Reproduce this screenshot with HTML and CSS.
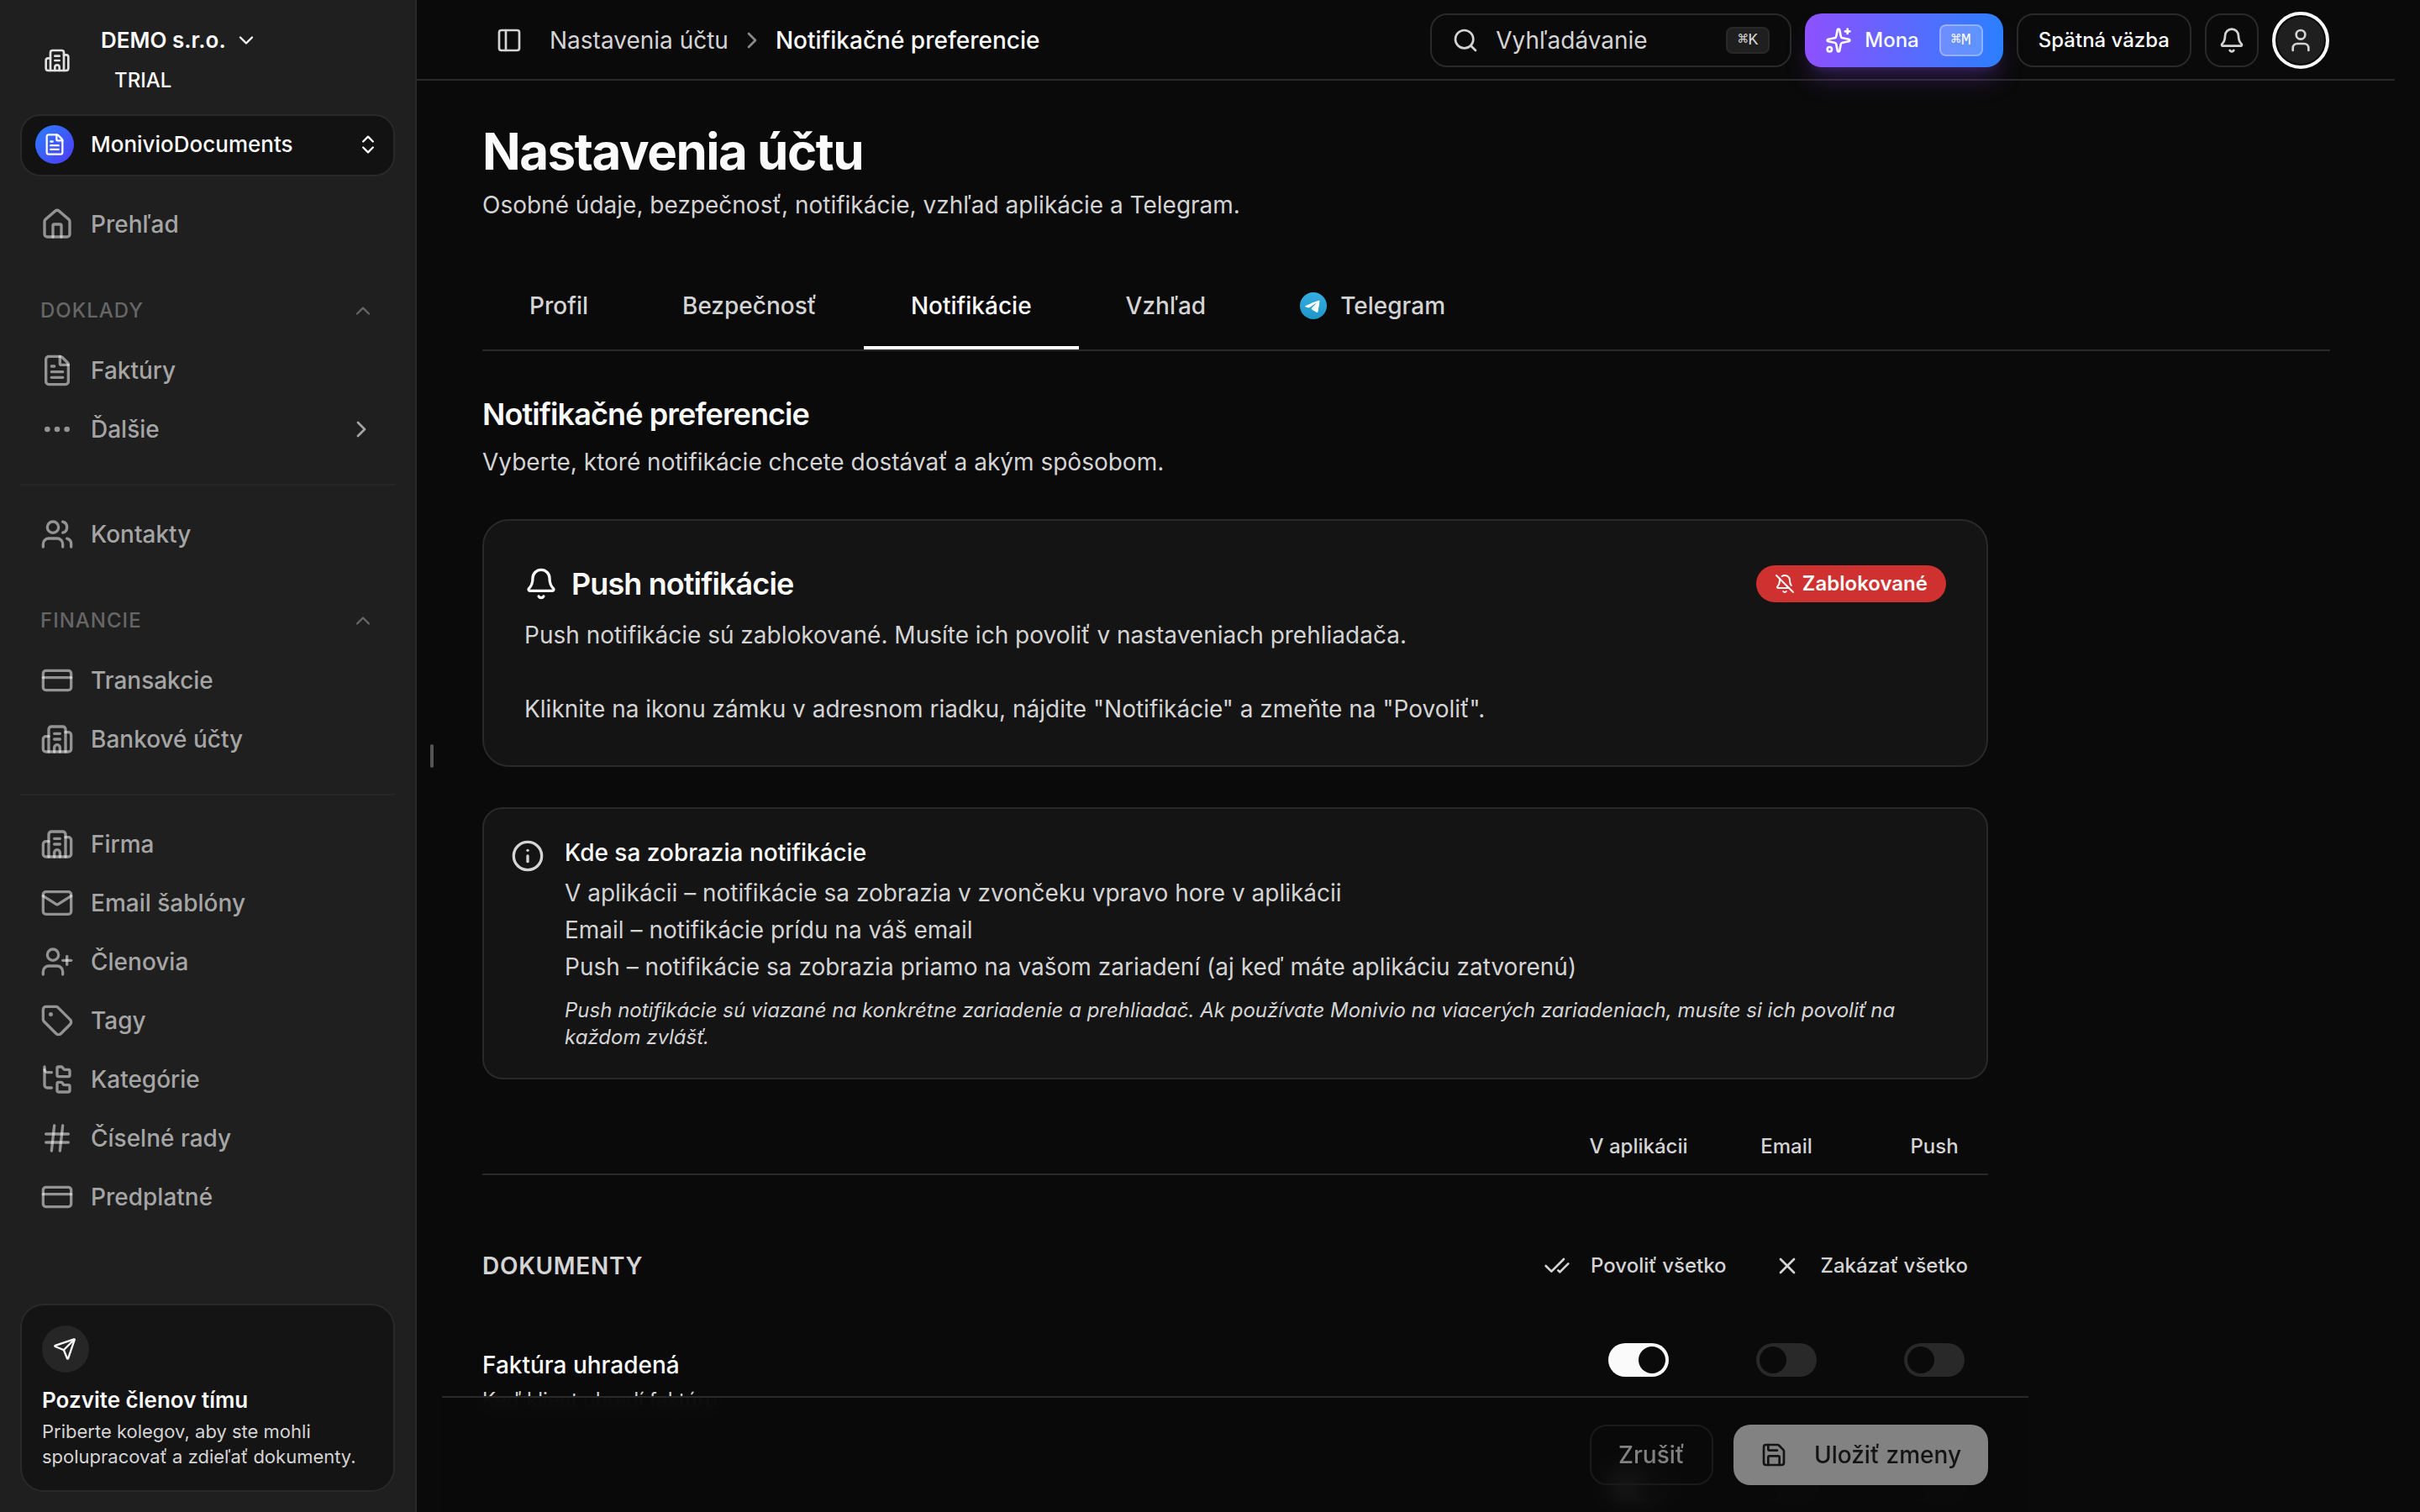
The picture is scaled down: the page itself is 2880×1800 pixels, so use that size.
FILE: index.html
```html
<!DOCTYPE html>
<html lang="sk">
<head>
<meta charset="utf-8">
<meta name="viewport" content="width=device-width, initial-scale=1">
<title>Nastavenia účtu – Notifikačné preferencie</title>
<link rel="stylesheet" href="styles.css">
</head>
<body>
<svg class="sprite" aria-hidden="true">
  <symbol id="building" viewBox="0 0 24 24"><path d="M10 12h4"/><path d="M10 8h4"/><path d="M14 21v-3a2 2 0 0 0-4 0v3"/><path d="M6 10H4a2 2 0 0 0-2 2v7a2 2 0 0 0 2 2h16a2 2 0 0 0 2-2V9a2 2 0 0 0-2-2h-2"/><path d="M6 21V5a2 2 0 0 1 2-2h8a2 2 0 0 1 2 2v16"/></symbol>
  <symbol id="file" viewBox="0 0 24 24"><path d="M6 22a2 2 0 0 1-2-2V4a2 2 0 0 1 2-2h8a2.4 2.4 0 0 1 1.704.706l3.588 3.588A2.4 2.4 0 0 1 20 8v12a2 2 0 0 1-2 2z"/><path d="M14 2v5a1 1 0 0 0 1 1h5"/><path d="M10 9H8"/><path d="M16 13H8"/><path d="M16 17H8"/></symbol>
  <symbol id="home" viewBox="0 0 24 24"><path d="M15 21v-8a1 1 0 0 0-1-1h-4a1 1 0 0 0-1 1v8"/><path d="M3 10a2 2 0 0 1 .709-1.528l7-6a2 2 0 0 1 2.582 0l7 6A2 2 0 0 1 21 10v9a2 2 0 0 1-2 2H5a2 2 0 0 1-2-2z"/></symbol>
  <symbol id="dots" viewBox="0 0 24 24"><circle cx="12" cy="12" r="1"/><circle cx="19" cy="12" r="1"/><circle cx="5" cy="12" r="1"/></symbol>
  <symbol id="users" viewBox="0 0 24 24"><path d="M16 21v-2a4 4 0 0 0-4-4H6a4 4 0 0 0-4 4v2"/><path d="M16 3.128a4 4 0 0 1 0 7.744"/><path d="M22 21v-2a4 4 0 0 0-3-3.87"/><circle cx="9" cy="7" r="4"/></symbol>
  <symbol id="card" viewBox="0 0 24 24"><rect x="2" y="5" width="20" height="14" rx="2"/><path d="M2 10h20"/></symbol>
  <symbol id="mail" viewBox="0 0 24 24"><path d="m22 7-8.991 5.727a2 2 0 0 1-2.009 0L2 7"/><rect x="2" y="4" width="20" height="16" rx="2"/></symbol>
  <symbol id="user-plus" viewBox="0 0 24 24"><path d="M16 21v-2a4 4 0 0 0-4-4H6a4 4 0 0 0-4 4v2"/><circle cx="9" cy="7" r="4"/><path d="M19 8v6"/><path d="M22 11h-6"/></symbol>
  <symbol id="tag" viewBox="0 0 24 24"><path d="M12.586 2.586A2 2 0 0 0 11.172 2H4a2 2 0 0 0-2 2v7.172a2 2 0 0 0 .586 1.414l8.704 8.704a2.426 2.426 0 0 0 3.42 0l6.58-6.58a2.426 2.426 0 0 0 0-3.42z"/><circle cx="7.5" cy="7.5" r=".5" fill="currentColor"/></symbol>
  <symbol id="tree" viewBox="0 0 24 24"><path d="M20 10a1 1 0 0 0 1-1V6a1 1 0 0 0-1-1h-2.5a1 1 0 0 1-.8-.4l-.9-1.2A1 1 0 0 0 15 3h-2a1 1 0 0 0-1 1v5a1 1 0 0 0 1 1Z"/><path d="M20 21a1 1 0 0 0 1-1v-3a1 1 0 0 0-1-1h-2.9a1 1 0 0 1-.88-.55l-.42-.85a1 1 0 0 0-.92-.6H13a1 1 0 0 0-1 1v5a1 1 0 0 0 1 1Z"/><path d="M3 5a2 2 0 0 0 2 2h3"/><path d="M3 3v13a2 2 0 0 0 2 2h3"/></symbol>
  <symbol id="hash" viewBox="0 0 24 24"><path d="M4 9h16"/><path d="M4 15h16"/><path d="M10 3 8 21"/><path d="m16 3-2 18"/></symbol>
  <symbol id="send" viewBox="0 0 24 24"><path d="M14.536 21.686a.5.5 0 0 0 .937-.024l6.5-19a.496.496 0 0 0-.635-.635l-19 6.5a.5.5 0 0 0-.024.937l7.93 3.18a2 2 0 0 1 1.112 1.11z"/><path d="m21.854 2.147-10.94 10.939"/></symbol>
  <symbol id="down" viewBox="0 0 24 24"><path d="m6 9 6 6 6-6"/></symbol>
  <symbol id="up" viewBox="0 0 24 24"><path d="m18 15-6-6-6 6"/></symbol>
  <symbol id="right" viewBox="0 0 24 24"><path d="m9 18 6-6-6-6"/></symbol>
  <symbol id="updown" viewBox="0 0 24 24"><path d="m7 15 5 5 5-5"/><path d="m7 9 5-5 5 5"/></symbol>
  <symbol id="panel" viewBox="0 0 24 24"><rect x="3" y="3" width="18" height="18" rx="2"/><path d="M9 3v18"/></symbol>
  <symbol id="search" viewBox="0 0 24 24"><path d="m21 21-4.34-4.34"/><circle cx="11" cy="11" r="8"/></symbol>
  <symbol id="sparkles" viewBox="0 0 24 24"><path d="M11.017 2.814a1 1 0 0 1 1.966 0l1.051 5.558a2 2 0 0 0 1.594 1.594l5.558 1.051a1 1 0 0 1 0 1.966l-5.558 1.051a2 2 0 0 0-1.594 1.594l-1.051 5.558a1 1 0 0 1-1.966 0l-1.051-5.558a2 2 0 0 0-1.594-1.594l-5.558-1.051a1 1 0 0 1 0-1.966l5.558-1.051a2 2 0 0 0 1.594-1.594z"/><path d="M20 2v4"/><path d="M22 4h-4"/><circle cx="4" cy="20" r="2"/></symbol>
  <symbol id="bell" viewBox="0 0 24 24"><path d="M10.268 21a2 2 0 0 0 3.464 0"/><path d="M3.262 15.326A1 1 0 0 0 4 17h16a1 1 0 0 0 .74-1.673C19.41 13.956 18 12.499 18 8A6 6 0 0 0 6 8c0 4.499-1.411 5.956-2.738 7.326"/></symbol>
  <symbol id="bell-off" viewBox="0 0 24 24"><path d="M10.268 21a2 2 0 0 0 3.464 0"/><path d="M17 17H4a1 1 0 0 1-.74-1.673C4.59 13.956 6 12.499 6 8a6 6 0 0 1 .258-1.742"/><path d="m2 2 20 20"/><path d="M8.668 3.01A6 6 0 0 1 18 8c0 2.687.77 4.653 1.707 6.05"/></symbol>
  <symbol id="user" viewBox="0 0 24 24"><path d="M19 21v-2a4 4 0 0 0-4-4H9a4 4 0 0 0-4 4v2"/><circle cx="12" cy="7" r="4"/></symbol>
  <symbol id="info" viewBox="0 0 24 24"><circle cx="12" cy="12" r="10"/><path d="M12 16v-4"/><path d="M12 8h.01"/></symbol>
  <symbol id="checks" viewBox="0 0 24 24"><path d="M18 6 7 17l-5-5"/><path d="m22 10-7.5 7.5L13 16"/></symbol>
  <symbol id="x" viewBox="0 0 24 24"><path d="M18 6 6 18"/><path d="m6 6 12 12"/></symbol>
  <symbol id="save" viewBox="0 0 24 24"><path d="M15.2 3a2 2 0 0 1 1.4.6l3.8 3.8a2 2 0 0 1 .6 1.4V19a2 2 0 0 1-2 2H5a2 2 0 0 1-2-2V5a2 2 0 0 1 2-2z"/><path d="M17 21v-7a1 1 0 0 0-1-1H8a1 1 0 0 0-1 1v7"/><path d="M7 3v4a1 1 0 0 0 1 1h7"/></symbol>
</svg>

<div class="app">
  <aside class="sidebar">
    <div class="company">
      <svg class="icon icon-sm"><use href="#building"/></svg>
      <div>
        <button class="company-name" type="button">DEMO s.r.o. <svg class="icon icon-xs"><use href="#down"/></svg></button>
        <p class="plan">TRIAL</p>
      </div>
    </div>

    <button class="switcher" type="button">
      <span class="switcher-logo"><svg class="icon icon-xs"><use href="#file"/></svg></span>
      <span class="switcher-name">MonivioDocuments</span>
      <svg class="icon icon-xs"><use href="#updown"/></svg>
    </button>

    <nav class="nav" aria-label="Hlavná navigácia">
      <a class="nav-link" href="#"><svg class="icon"><use href="#home"/></svg>Prehľad</a>
      <button class="nav-label" type="button">DOKLADY <svg class="icon icon-xs"><use href="#up"/></svg></button>
      <a class="nav-link" href="#"><svg class="icon"><use href="#file"/></svg>Faktúry</a>
      <a class="nav-link" href="#"><svg class="icon"><use href="#dots"/></svg>Ďalšie<svg class="icon nav-more"><use href="#right"/></svg></a>
      <hr class="nav-rule">
      <a class="nav-link" href="#"><svg class="icon"><use href="#users"/></svg>Kontakty</a>
      <button class="nav-label" type="button">FINANCIE <svg class="icon icon-xs"><use href="#up"/></svg></button>
      <a class="nav-link" href="#"><svg class="icon"><use href="#card"/></svg>Transakcie</a>
      <a class="nav-link" href="#"><svg class="icon"><use href="#building"/></svg>Bankové účty</a>
      <hr class="nav-rule">
      <a class="nav-link" href="#"><svg class="icon"><use href="#building"/></svg>Firma</a>
      <a class="nav-link" href="#"><svg class="icon"><use href="#mail"/></svg>Email šablóny</a>
      <a class="nav-link" href="#"><svg class="icon"><use href="#user-plus"/></svg>Členovia</a>
      <a class="nav-link" href="#"><svg class="icon"><use href="#tag"/></svg>Tagy</a>
      <a class="nav-link" href="#"><svg class="icon"><use href="#tree"/></svg>Kategórie</a>
      <a class="nav-link" href="#"><svg class="icon"><use href="#hash"/></svg>Číselné rady</a>
      <a class="nav-link" href="#"><svg class="icon"><use href="#card"/></svg>Predplatné</a>
    </nav>

    <a class="invite" href="#">
      <span class="invite-icon"><svg class="icon icon-xs"><use href="#send"/></svg></span>
      <strong class="invite-title">Pozvite členov tímu</strong>
      <span class="invite-text">Priberte kolegov, aby ste mohli spolupracovať a zdieľať dokumenty.</span>
    </a>
  </aside>
  <span class="resize-handle"></span>

  <main class="main">
    <header class="topbar">
      <button class="panel-toggle" type="button" aria-label="Bočný panel"><svg class="icon icon-sm"><use href="#panel"/></svg></button>
      <nav class="crumbs" aria-label="Navigačná cesta">
        <a href="#">Nastavenia účtu</a>
        <svg class="icon icon-sm"><use href="#right"/></svg>
        <span class="crumb-current">Notifikačné preferencie</span>
      </nav>
      <label class="search">
        <svg class="icon icon-sm"><use href="#search"/></svg>
        <input type="text" placeholder="Vyhľadávanie" aria-label="Vyhľadávanie">
        <kbd class="kbd">⌘K</kbd>
      </label>
      <button class="mona" type="button"><svg class="icon icon-sm"><use href="#sparkles"/></svg>Mona <kbd class="kbd kbd-mona">⌘M</kbd></button>
      <button class="feedback" type="button">Spätná väzba</button>
      <button class="bell" type="button" aria-label="Notifikácie"><svg class="icon icon-sm"><use href="#bell"/></svg></button>
      <button class="avatar" type="button" aria-label="Používateľ"><svg class="icon icon-sm"><use href="#user"/></svg></button>
    </header>

    <div class="content">
      <h1>Nastavenia účtu</h1>
      <p class="lead">Osobné údaje, bezpečnosť, notifikácie, vzhľad aplikácie a Telegram.</p>

      <nav class="tabs" aria-label="Nastavenia">
        <a class="tab" href="#">Profil</a>
        <a class="tab" href="#">Bezpečnosť</a>
        <a class="tab tab-active" href="#" aria-current="page">Notifikácie</a>
        <a class="tab" href="#">Vzhľad</a>
        <a class="tab" href="#">
          <svg class="telegram" viewBox="0 0 240 240"><defs><linearGradient id="tg" x1="0" y1="0" x2="0" y2="1"><stop offset="0" stop-color="#37aee2"/><stop offset="1" stop-color="#1e96c8"/></linearGradient></defs><circle cx="120" cy="120" r="120" fill="url(#tg)"/><path fill="#fff" d="M54.3 118.8c35-15.2 58.3-25.3 70-30.2 33.3-13.9 40.3-16.3 44.8-16.4 1 0 3.2.2 4.7 1.4 1.2 1 1.5 2.3 1.7 3.3s.4 3.1.2 4.7c-1.8 19-9.6 65.1-13.6 86.3-1.7 9-5 12-8.2 12.3-7 .6-12.3-4.6-19-9-10.6-6.9-16.5-11.2-26.8-18-11.9-7.8-4.2-12.1 2.6-19.1 1.8-1.8 32.5-29.8 33.1-32.3.1-.3.1-1.5-.6-2.1-.7-.6-1.7-.4-2.5-.2-1.1.2-17.9 11.4-50.6 33.5-4.8 3.3-9.1 4.9-13 4.8-4.3-.1-12.5-2.4-18.7-4.4-7.5-2.4-13.5-3.7-13-7.9.3-2.2 3.3-4.4 8.9-6.7z"/></svg>
          Telegram
        </a>
      </nav>

      <section class="prefs">
        <h2>Notifikačné preferencie</h2>
        <p class="section-text">Vyberte, ktoré notifikácie chcete dostávať a akým spôsobom.</p>

        <article class="panel push">
          <header class="push-head">
            <h2 class="push-title"><svg class="icon"><use href="#bell"/></svg>Push notifikácie</h2>
            <span class="badge"><svg class="icon icon-badge"><use href="#bell-off"/></svg>Zablokované</span>
          </header>
          <p>Push notifikácie sú zablokované. Musíte ich povoliť v nastaveniach prehliadača.</p>
          <p>Kliknite na ikonu zámku v adresnom riadku, nájdite "Notifikácie" a zmeňte na "Povoliť".</p>
        </article>

        <article class="panel where">
          <svg class="icon"><use href="#info"/></svg>
          <div>
            <h3>Kde sa zobrazia notifikácie</h3>
            <ul>
              <li>V aplikácii – notifikácie sa zobrazia v zvončeku vpravo hore v aplikácii</li>
              <li>Email – notifikácie prídu na váš email</li>
              <li>Push – notifikácie sa zobrazia priamo na vašom zariadení (aj keď máte aplikáciu zatvorenú)</li>
            </ul>
            <p class="note">Push notifikácie sú viazané na konkrétne zariadenie a prehliadač. Ak používate Monivio na viacerých zariadeniach, musíte si ich povoliť na každom zvlášť.</p>
          </div>
        </article>

        <table class="matrix">
          <colgroup><col><col class="col-channel"><col class="col-channel"><col class="col-channel"></colgroup>
          <thead>
            <tr><td></td><th scope="col">V aplikácii</th><th scope="col">Email</th><th scope="col">Push</th></tr>
          </thead>
          <tbody>
            <tr class="group">
              <td colspan="4">
                <div class="group-head">
                  <h3>DOKUMENTY</h3>
                  <button class="ghost" type="button"><svg class="icon icon-sm"><use href="#checks"/></svg>Povoliť všetko</button>
                  <button class="ghost" type="button"><svg class="icon icon-sm"><use href="#x"/></svg>Zakázať všetko</button>
                </div>
              </td>
            </tr>
            <tr class="item">
              <th scope="row">Faktúra uhradená<span class="item-text">Keď klient uhradí faktúru</span></th>
              <td><input class="switch" type="checkbox" checked aria-label="V aplikácii"></td>
              <td><input class="switch" type="checkbox" aria-label="Email"></td>
              <td><input class="switch" type="checkbox" aria-label="Push"></td>
            </tr>
            <tr class="item">
              <td></td>
              <td><input class="switch" type="checkbox" checked aria-label="V aplikácii"></td>
              <td><input class="switch" type="checkbox" aria-label="Email"></td>
              <td><input class="switch" type="checkbox" aria-label="Push"></td>
            </tr>
          </tbody>
        </table>

        <footer class="actions">
          <button class="btn btn-cancel" type="button" disabled>Zrušiť</button>
          <button class="btn btn-save" type="button" disabled><svg class="icon icon-sm"><use href="#save"/></svg>Uložiť zmeny</button>
        </footer>
      </section>
    </div>
  </main>
</div>
</body>
</html>
```
FILE: styles.css
```css
:root {
  --bg: #0a0a0a;
  --panel: #141414;
  --sidebar: #1f1f1f;
  --line: #292929;
  --text: #fafafa;
  --muted: #d4d4d4;
}

* { box-sizing: border-box; margin: 0; padding: 0; }

body {
  background: var(--bg);
  color: var(--text);
  font: 400 28px/44px Inter, "Noto Sans", sans-serif;
}

button, input { font: inherit; color: inherit; background: none; border: 0; }
a { color: inherit; text-decoration: none; }
ul { list-style: none; }
.sprite { display: none; }

.icon {
  flex: none;
  width: 40px;
  height: 40px;
  fill: none;
  stroke: currentColor;
  stroke-width: 2;
  stroke-linecap: round;
  stroke-linejoin: round;
}
.icon-sm { width: 32px; height: 32px; }
.icon-xs { width: 28px; height: 28px; }
.icon-badge { width: 24px; height: 24px; }

.app { display: flex; height: 100vh; }

/* Sidebar */
.sidebar {
  flex: none;
  display: flex;
  flex-direction: column;
  width: 496px;
  padding: 24px;
  background: var(--sidebar);
  border-right: 2px solid var(--line);
}

.company {
  display: flex;
  align-items: center;
  gap: 36px;
  padding-left: 28px;
  line-height: 48px;
  color: #e0e0e0;
}
.company-name {
  display: flex;
  align-items: center;
  gap: 10px;
  font-size: 26px;
  font-weight: 600;
}
.company-name, .plan { color: var(--text); }
.plan { padding-left: 16px; font-size: 24px; font-weight: 500; }

.switcher {
  display: flex;
  align-items: center;
  gap: 20px;
  height: 74px;
  margin-top: 16px;
  padding: 0 16px 2px;
  background: #121212;
  border: 2px solid var(--line);
  border-radius: 24px;
  text-align: left;
}
.switcher-logo {
  display: grid;
  place-items: center;
  width: 46px;
  height: 46px;
  border-radius: 50%;
  background: linear-gradient(135deg, #2b7fff, #4f39f6);
}
.switcher-name { flex: 1; font-size: 26px; font-weight: 500; }

.nav { margin-top: 22px; }
.nav-link {
  display: flex;
  align-items: center;
  gap: 20px;
  height: 70px;
  padding: 0 24px;
  color: #a5a5a5;
  font-weight: 500;
  line-height: 46px;
}
.nav-link .icon { stroke: rgba(255, 255, 255, .52); }
.nav-link .nav-more { width: 32px; height: 32px; margin-left: auto; stroke: #a5a5a5; }
.nav-label {
  display: flex;
  align-items: center;
  justify-content: space-between;
  width: 100%;
  height: 73px;
  margin-top: 31px;
  padding: 0 24px;
  color: #666;
  font-size: 24px;
  font-weight: 500;
  letter-spacing: 1px;
}
.nav-rule {
  height: 2px;
  margin: 30px 0 23px;
  border: 0;
  background: #262626;
}

.invite {
  display: flex;
  flex-direction: column;
  margin-top: auto;
  padding: 24px;
  background: var(--panel);
  border: 2px solid var(--line);
  border-radius: 28px;
}
.invite-icon {
  display: grid;
  place-items: center;
  width: 56px;
  height: 56px;
  padding-right: 2px;
  border-radius: 50%;
  background: #262626;
}
.invite-title { margin-top: 15px; font-size: 26px; font-weight: 600; line-height: 36px; }
.invite-text { margin: 4px 0 1px; color: var(--muted); font-size: 22px; line-height: 30px; }

.resize-handle {
  flex: none;
  align-self: center;
  width: 4px;
  height: 28px;
  margin: 0 -20px 0 16px;
  border-radius: 2px;
  background: #555;
}

/* Main column */
.main {
  flex: 1;
  display: flex;
  flex-direction: column;
  min-width: 0;
  padding-right: 30px;
}

.topbar {
  flex: none;
  display: flex;
  align-items: center;
  gap: 16px;
  height: 96px;
  padding: 1px 78px 0 94px;
  border-bottom: 2px solid var(--line);
}
.panel-toggle, .bell, .avatar { display: grid; place-items: center; }
.panel-toggle, .bell { color: var(--muted); }
.crumbs {
  display: flex;
  align-items: center;
  gap: 12px;
  margin: 0 auto 0 16px;
  color: var(--muted);
}
.crumbs .icon { color: #8a8a8a; }
.crumb-current { color: var(--text); font-weight: 500; }

.search, .mona, .feedback, .bell {
  display: flex;
  align-items: center;
  height: 64px;
  border-radius: 20px;
}
.search, .feedback, .bell { border: 2px solid var(--line); }
.search {
  gap: 20px;
  width: 430px;
  padding: 0 24px;
  color: var(--muted);
}
.search input { flex: 1; min-width: 0; outline: 0; }
.search input::placeholder { color: inherit; opacity: 1; }
.kbd {
  height: 32px;
  padding: 0 12px;
  background: #1f1f1f;
  border: 2px solid var(--line);
  border-radius: 8px;
  font: 500 20px/28px "Liberation Mono", "DejaVu Sans Mono", monospace;
}
.mona {
  gap: 15px;
  padding: 0 24px;
  background: linear-gradient(90deg, #8e51ff, #2b7fff);
  box-shadow: 0 20px 30px -6px rgba(142, 81, 255, .25), 0 8px 12px -8px rgba(142, 81, 255, .25);
  font-size: 24px;
  font-weight: 500;
}
.kbd-mona {
  height: 38px;
  margin-left: 9px;
  background: rgba(255, 255, 255, .2);
  border-color: rgba(255, 255, 255, .3);
  line-height: 34px;
}
.feedback { padding: 0 24px; font-size: 24px; font-weight: 500; }
.bell { width: 64px; justify-content: center; }
.avatar {
  width: 68px;
  height: 68px;
  border: 4px solid var(--text);
  border-radius: 50%;
  background: #1f1f1f;
  box-shadow: inset 0 0 0 2px var(--bg);
  color: var(--muted);
}

.content {
  flex: 1;
  min-height: 0;
  overflow-y: auto;
  scrollbar-width: none;
  padding: 48px 77px 0 78px;
}

h1 { font-size: 60px; font-weight: 700; line-height: 72px; letter-spacing: -0.025em; }
h2 { font-size: 36px; font-weight: 600; line-height: 48px; letter-spacing: -0.025em; }
h3 { font-size: 28px; font-weight: 500; line-height: 40px; }
.lead { margin-top: 6px; color: var(--muted); }

.tabs {
  display: flex;
  margin-top: 48px;
  border-bottom: 2px solid var(--line);
}
.tab {
  display: flex;
  align-items: center;
  gap: 16px;
  padding: 28px 56px 26px;
  border-bottom: 4px solid transparent;
  color: var(--muted);
  font-weight: 500;
}
.tab-active { border-color: #fff; color: var(--text); }
.telegram { width: 32px; height: 32px; }

.prefs { max-width: 1792px; padding-top: 51px; }
.section-text { margin-top: 11px; color: var(--muted); }

.panel {
  margin-top: 48px;
  background: var(--panel);
  border: 2px solid var(--line);
  border-radius: 24px;
  color: var(--muted);
}
.push { margin-top: 46px; padding: 48px 48px 45px; border-radius: 32px; }
.push-head { display: flex; align-items: center; justify-content: space-between; height: 54px; color: var(--text); }
.push-title { display: flex; align-items: center; gap: 16px; }
.push p { margin-top: 44px; }
.push-head + p { margin-top: 12px; }
.badge {
  display: flex;
  align-items: center;
  gap: 9px;
  height: 44px;
  padding: 0 22px;
  border-radius: 22px;
  background: #cf3030;
  font-size: 24px;
  font-weight: 600;
}

.where { display: flex; gap: 24px; padding: 32px; }
.where > .icon { margin-top: 4px; }
.where h3 { color: var(--text); }
.where ul { margin-top: 6px; }
.note { margin-top: 14px; font-size: 24px; font-style: italic; line-height: 32px; }

/* Channel table */
.matrix { width: 100%; margin-top: 48px; border-collapse: collapse; table-layout: fixed; }
.col-channel { width: 176px; }
.matrix thead th {
  padding: 16px 0 16px 48px;
  color: var(--muted);
  font-size: 24px;
  font-weight: 500;
  line-height: 32px;
}
.matrix thead tr { border-bottom: 2px solid var(--line); }
.group-head { display: flex; align-items: center; gap: 8px; padding: 76px 0 34px; }
.group-head h3 {
  margin-right: auto;
  color: var(--muted);
  font-weight: 600;
  letter-spacing: 0.025em;
}
.ghost {
  display: flex;
  align-items: center;
  gap: 24px;
  height: 64px;
  padding: 0 24px;
  color: var(--muted);
  font-size: 24px;
  font-weight: 500;
}
.item th, .item td { padding-top: 26px; padding-bottom: 23px; vertical-align: top; }
.item th { padding-top: 30px; text-align: left; font-weight: 500; }
.item td { height: 149px; padding-left: 48px; text-align: center; line-height: 0; }
.item-text { display: block; margin-top: 4px; color: var(--muted); font-size: 24px; font-weight: 400; line-height: 32px; }

.switch {
  appearance: none;
  display: inline-flex;
  width: 72px;
  height: 40px;
  padding: 4px;
  border-radius: 20px;
  background: #292929;
}
.switch::before {
  content: "";
  width: 32px;
  height: 32px;
  border-radius: 50%;
  background: var(--bg);
}
.switch:checked { justify-content: flex-end; background: #fafafa; }

.actions {
  position: sticky;
  bottom: 0;
  display: flex;
  justify-content: flex-end;
  gap: 24px;
  margin: 0 -48px;
  padding: 32px 48px;
  border-top: 2px solid var(--line);
  background: rgba(10, 10, 10, .95);
  backdrop-filter: blur(12px);
}
.btn {
  display: flex;
  align-items: center;
  gap: 32px;
  height: 72px;
  padding: 0 32px;
  border-radius: 20px;
  font-weight: 500;
}
.btn-cancel { border: 2px solid #1a1a1a; color: #828282; }
.btn-save { background: #828282; color: #141414; }
```
